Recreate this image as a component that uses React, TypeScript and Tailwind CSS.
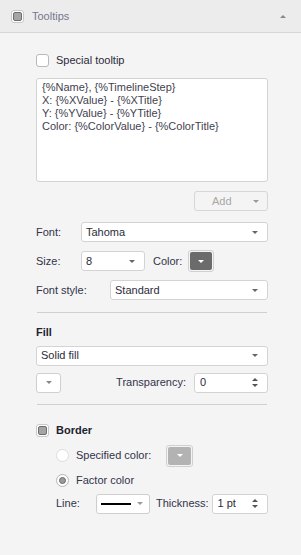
import React from "react";

const font = { fontFamily: '"Liberation Sans", Arial, sans-serif' };

const Caret = ({ color = "border-t-[#666]" }: { color?: string }) => (
  <span className={`inline-block h-0 w-0 border-x-[3px] border-t-[3px] border-x-transparent ${color}`} />
);

const Select = ({ value, className = "" }: { value: React.ReactNode; className?: string }) => (
  <div
    className={`flex h-[20px] items-center justify-between rounded-[3px] border border-[#d3d3d3] bg-white pl-[4px] pr-[9px] text-[#2b2b3b] ${className}`}
  >
    <span>{value}</span>
    <Caret />
  </div>
);

const Spin = ({ value, className = "" }: { value: string; className?: string }) => (
  <div
    className={`flex h-[20px] items-center justify-between rounded-[3px] border border-[#d3d3d3] bg-white pl-[5px] pr-[9px] text-[#2b2b3b] ${className}`}
  >
    <span>{value}</span>
    <span className="flex flex-col gap-[3px]">
      <span className="inline-block h-0 w-0 border-x-[3px] border-b-[3px] border-x-transparent border-b-[#555]" />
      <Caret color="border-t-[#555]" />
    </span>
  </div>
);

const ColorBtn = ({ fill }: { fill: string }) => (
  <div className="rounded-[3px] border border-[#d0d0d0] p-[1px]">
    <div className={`flex h-[18px] w-[22px] items-center justify-center rounded-[2px] ${fill}`}>
      <Caret color="border-t-white" />
    </div>
  </div>
);

const Check = ({ on = false }: { on?: boolean }) =>
  on ? (
    <span className="flex h-[13px] w-[13px] items-center justify-center rounded-[3px] border border-[#c9c9c9] bg-white">
      <span className="h-[9px] w-[9px] rounded-[2px] border border-[#6e6e6e] bg-[#a5a5a5]" />
    </span>
  ) : (
    <span className="h-[13px] w-[13px] rounded-[3px] border border-[#b9b9b9] bg-white" />
  );

const Radio = ({ on = false, dim = false }: { on?: boolean; dim?: boolean }) => (
  <span
    className={`flex h-[13px] w-[13px] items-center justify-center rounded-full border bg-white ${dim ? "border-[#dcdcdc]" : "border-[#b4b4b4]"}`}
  >
    {on && <span className="h-[7px] w-[7px] rounded-full border border-[#6a6a6a] bg-[#9a9a9a]" />}
  </span>
);

const Separator = ({ className = "" }: { className?: string }) => (
  <div className={`mx-[1px] h-px bg-[#cfcfcf] ${className}`} />
);

export default function App() {
  return (
    <div style={font} className="h-[555px] w-[301px] overflow-hidden bg-[#f4f4f4] text-[11px] text-[#33334a]">
      <div className="flex h-[33px] items-center border-b border-[#d6d6d6] bg-[#ececec] pl-[11px] pr-[15px]">
        <Check on />
        <span className="ml-[8px] text-[#767690]">Tooltips</span>
        <span className="ml-auto inline-block h-0 w-0 border-x-[3px] border-b-[3px] border-x-transparent border-b-[#888]" />
      </div>

      <div className="ml-[36px] w-[232px]">
        <div className="mt-[21px] flex h-[13px] items-center">
          <Check />
          <span className="ml-[7px] text-[#2b2b3b]">Special tooltip</span>
        </div>

        <div className="mt-[11px] h-[104px] rounded-[3px] border border-[#d3d3d3] bg-white px-[5px] pt-[2px] leading-[13px] text-[#3f3f4f]">
          <div>{"{%Name}, {%TimelineStep}"}</div>
          <div>{"X: {%XValue} - {%XTitle}"}</div>
          <div>{"Y: {%YValue} - {%YTitle}"}</div>
          <div>{"Color: {%ColorValue} - {%ColorTitle}"}</div>
        </div>

        <div className="mt-[9px] flex justify-end">
          <div className="flex h-[20px] w-[74px] items-center justify-between rounded-[3px] border border-[#d6d6d6] pl-[17px] pr-[8px] text-[#a8a8a8]">
            <span>Add</span>
            <Caret color="border-t-[#999]" />
          </div>
        </div>

        <div className="mt-[11px] flex items-center">
          <span className="w-[45px]">Font:</span>
          <Select value="Tahoma" className="flex-1" />
        </div>

        <div className="mt-[8px] flex items-center">
          <span className="w-[45px]">Size:</span>
          <Select value="8" className="w-[64px]" />
          <span className="ml-[8px] mr-[6px]">Color:</span>
          <ColorBtn fill="bg-[#6b6b6b]" />
        </div>

        <div className="mt-[8px] flex items-center">
          <span className="w-[74px]">Font style:</span>
          <Select value="Standard" className="flex-1" />
        </div>

        <Separator className="mt-[12px]" />

        <div className="mt-[11px] font-bold text-[#222230]">Fill</div>

        <Select value="Solid fill" className="mt-[5px]" />

        <div className="mt-[7px] flex items-center">
          <div className="flex h-[20px] w-[25px] items-center justify-center rounded-[3px] border border-[#cfcfcf] bg-white">
            <Caret color="border-t-[#888]" />
          </div>
          <span className="ml-auto mr-[8px]">Transparency:</span>
          <Spin value="0" className="w-[74px]" />
        </div>

        <Separator className="mt-[11px]" />

        <div className="mt-[19px] flex h-[13px] items-center">
          <Check on />
          <span className="ml-[7px] font-bold text-[#222230]">Border</span>
        </div>

        <div className="ml-[20px]">
          <div className="mt-[8px] flex h-[22px] items-center">
            <Radio dim />
            <span className="ml-[7px]">Specified color:</span>
            <span className="ml-[15px]">
              <div className="rounded-[3px] border border-[#d0d0d0] p-[1px]">
                <div className="flex h-[18px] w-[23px] items-center justify-center rounded-[2px] bg-[#b3b3b3]">
                  <Caret color="border-t-white" />
                </div>
              </div>
            </span>
          </div>

          <div className="mt-[3px] flex h-[22px] items-center">
            <Radio on />
            <span className="ml-[7px]">Factor color</span>
          </div>
        </div>

        <div className="ml-[20px] mt-[2px] flex items-center">
          <span className="w-[40px]">Line:</span>
          <div className="flex h-[20px] w-[54px] items-center justify-between rounded-[3px] border border-[#cfcfcf] bg-white pl-[4px] pr-[6px]">
            <span className="h-[2px] w-[30px] bg-black" />
            <Caret color="border-t-[#999]" />
          </div>
          <span className="ml-[6px] mr-[3px]">Thickness:</span>
          <Spin value="1 pt" className="flex-1" />
        </div>
      </div>
    </div>
  );
}
